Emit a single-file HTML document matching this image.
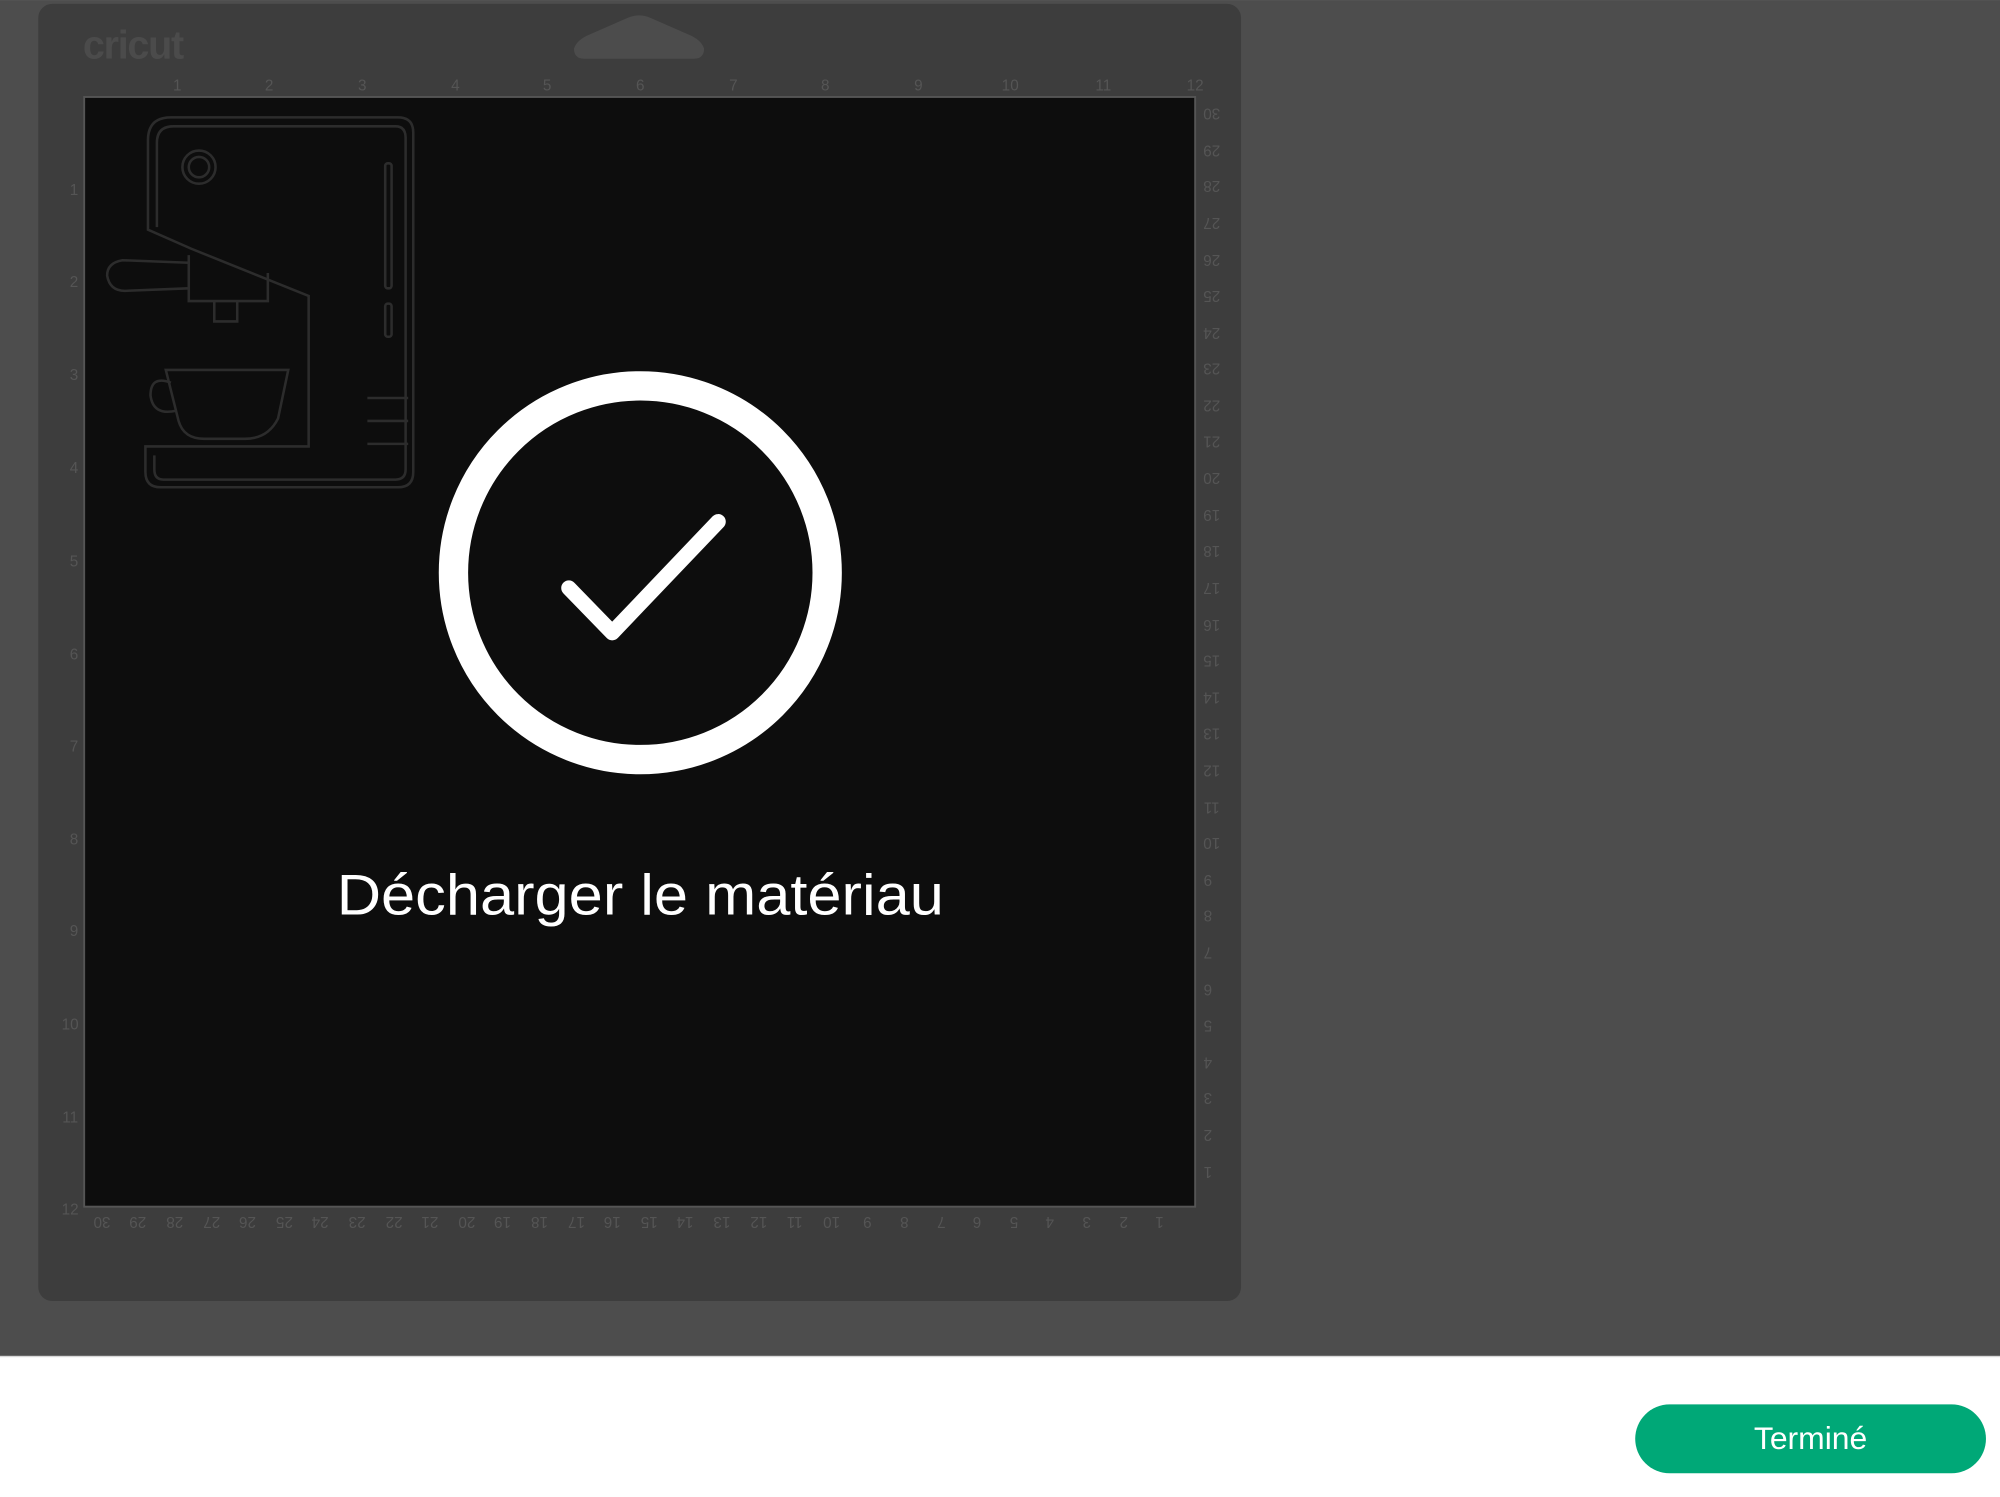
<!DOCTYPE html>
<html><head><meta charset="utf-8"><style>
html,body{margin:0;padding:0;width:2000px;height:1497px;overflow:hidden;background:#fff}
svg{display:block}
</style></head><body>
<svg width="2000" height="1497" viewBox="0 0 1568 1173.6" xmlns="http://www.w3.org/2000/svg" font-family="Liberation Sans, sans-serif">
<rect x="0" y="0" width="1568" height="1063" fill="#4d4d4d"/>
<rect x="0" y="1063" width="1568" height="1" fill="#d8d8d8"/>
<rect x="30" y="3" width="943" height="1017" rx="11" fill="#3d3d3d"/>
<text x="65" y="46" font-size="31" font-weight="bold" fill="#4b4b4b" letter-spacing="-1">cricut</text>
<path d="M450 38 Q452 32 460 28 L492 14 Q501 10 510 14 L542 28 Q550 32 552 38 Q552 46 544 46 L458 46 Q450 46 450 38Z" fill="#4c4c4c"/>
<rect x="66" y="76" width="871" height="870" fill="#0d0d0d" stroke="#555" stroke-width="1.5"/>
<g fill="#555" font-size="12" text-anchor="middle">
<text x="139" y="71">1</text><text x="211" y="71">2</text><text x="284" y="71">3</text><text x="357" y="71">4</text><text x="429" y="71">5</text><text x="502" y="71">6</text><text x="575" y="71">7</text><text x="647" y="71">8</text><text x="720" y="71">9</text><text x="792" y="71">10</text><text x="865" y="71">11</text><text x="937" y="71">12</text>
<text x="58" y="153">1</text><text x="58" y="225">2</text><text x="58" y="298">3</text><text x="58" y="371">4</text><text x="58" y="444">5</text><text x="58" y="517">6</text><text x="58" y="589">7</text><text x="58" y="662">8</text><text x="58" y="734">9</text><text x="55" y="807">10</text><text x="55" y="880">11</text><text x="55" y="952">12</text>
</g>
<g fill="#555" font-size="12" text-anchor="middle" id="rn"></g>
<g fill="none" stroke="#2c2c2c" stroke-width="2">
<path d="M116 180 L116 110 Q116 92 134 92 L312 92 Q324 92 324 104 L324 370 Q324 382 312 382 L126 382 Q114 382 114 370 L114 350 L242 350 L242 232 L150 195 Z"/>
<path d="M123 178 L123 112 Q123 99 136 99 L310 99 Q318 99 318 108 L318 368 Q318 376 310 376 L128 376 Q121 376 121 368 L121 357"/>
<circle cx="156" cy="131" r="13"/><circle cx="156" cy="131" r="8"/>
<rect x="302" y="128" width="5" height="98" rx="2"/><rect x="302" y="238" width="5" height="26" rx="2"/>
<path d="M148 200 L148 236 L210 236 L210 214"/>
<path d="M168 236 L168 252 L186 252 L186 236"/>
<path d="M148 206 L96 204 Q84 206 84 216 Q86 228 98 228 L148 226"/>
<path d="M130 290 L226 290 L218 328 Q210 344 192 344 L160 344 Q144 344 140 330 Z"/>
<path d="M134 300 Q118 294 118 310 Q120 326 138 322"/>
<path d="M288 312 L320 312 M288 330 L320 330 M288 348 L320 348"/>
</g>
<circle cx="502" cy="449" r="146.5" fill="none" stroke="#fff" stroke-width="23"/>
<path d="M446 461 L480 496 L563 409" fill="none" stroke="#fff" stroke-width="12" stroke-linecap="round" stroke-linejoin="round"/>
<text x="502" y="717" font-size="45" fill="#fff" text-anchor="middle" textLength="476" lengthAdjust="spacingAndGlyphs">Décharger le matériau</text>
<rect x="1282" y="1101" width="275" height="54" rx="27" fill="#00a877"/>
<text x="1419.5" y="1136" font-size="25" fill="#fff" text-anchor="middle">Terminé</text>
<g fill="#555" font-size="12" text-anchor="middle">
<text transform="translate(950,85) rotate(180)">30</text><text transform="translate(950,114) rotate(180)">29</text><text transform="translate(950,142) rotate(180)">28</text><text transform="translate(950,171) rotate(180)">27</text><text transform="translate(950,200) rotate(180)">26</text><text transform="translate(950,228) rotate(180)">25</text><text transform="translate(950,257) rotate(180)">24</text><text transform="translate(950,285) rotate(180)">23</text><text transform="translate(950,314) rotate(180)">22</text><text transform="translate(950,342) rotate(180)">21</text><text transform="translate(950,371) rotate(180)">20</text><text transform="translate(950,400) rotate(180)">19</text><text transform="translate(950,428) rotate(180)">18</text><text transform="translate(950,457) rotate(180)">17</text><text transform="translate(950,486) rotate(180)">16</text><text transform="translate(950,514) rotate(180)">15</text><text transform="translate(950,543) rotate(180)">14</text><text transform="translate(950,571) rotate(180)">13</text><text transform="translate(950,600) rotate(180)">12</text><text transform="translate(950,629) rotate(180)">11</text><text transform="translate(950,657) rotate(180)">10</text><text transform="translate(947,686) rotate(180)">9</text><text transform="translate(947,714) rotate(180)">8</text><text transform="translate(947,743) rotate(180)">7</text><text transform="translate(947,772) rotate(180)">6</text><text transform="translate(947,800) rotate(180)">5</text><text transform="translate(947,829) rotate(180)">4</text><text transform="translate(947,857) rotate(180)">3</text><text transform="translate(947,886) rotate(180)">2</text><text transform="translate(947,915) rotate(180)">1</text>
<text transform="translate(80,954) rotate(180)">30</text><text transform="translate(108,954) rotate(180)">29</text><text transform="translate(137,954) rotate(180)">28</text><text transform="translate(166,954) rotate(180)">27</text><text transform="translate(194,954) rotate(180)">26</text><text transform="translate(223,954) rotate(180)">25</text><text transform="translate(251,954) rotate(180)">24</text><text transform="translate(280,954) rotate(180)">23</text><text transform="translate(309,954) rotate(180)">22</text><text transform="translate(337,954) rotate(180)">21</text><text transform="translate(366,954) rotate(180)">20</text><text transform="translate(394,954) rotate(180)">19</text><text transform="translate(423,954) rotate(180)">18</text><text transform="translate(452,954) rotate(180)">17</text><text transform="translate(480,954) rotate(180)">16</text><text transform="translate(509,954) rotate(180)">15</text><text transform="translate(537,954) rotate(180)">14</text><text transform="translate(566,954) rotate(180)">13</text><text transform="translate(595,954) rotate(180)">12</text><text transform="translate(623,954) rotate(180)">11</text><text transform="translate(652,954) rotate(180)">10</text><text transform="translate(680,954) rotate(180)">9</text><text transform="translate(709,954) rotate(180)">8</text><text transform="translate(738,954) rotate(180)">7</text><text transform="translate(766,954) rotate(180)">6</text><text transform="translate(795,954) rotate(180)">5</text><text transform="translate(823,954) rotate(180)">4</text><text transform="translate(852,954) rotate(180)">3</text><text transform="translate(881,954) rotate(180)">2</text><text transform="translate(909,954) rotate(180)">1</text>
</g>
</svg>
</body></html>
